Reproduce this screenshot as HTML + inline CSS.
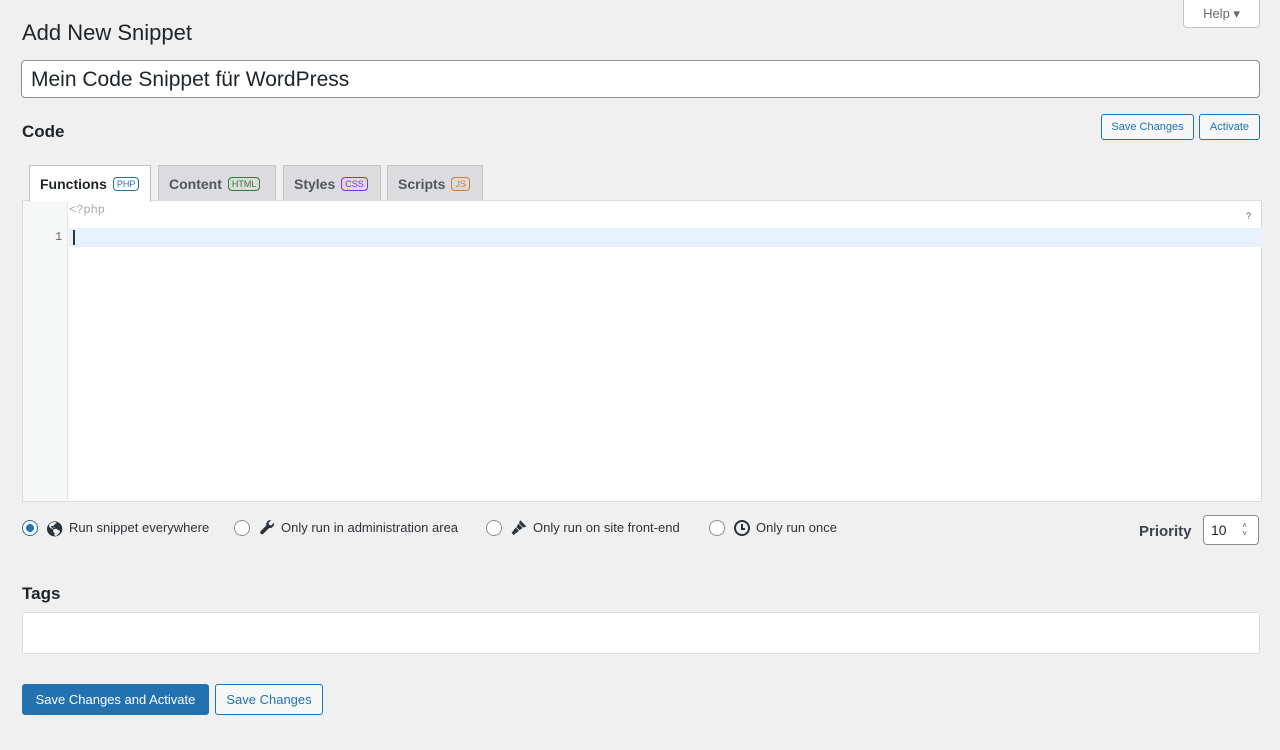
<!DOCTYPE html>
<html><head><meta charset="utf-8"><style>
*{box-sizing:border-box}
body{margin:0;width:1280px;height:750px;background:#f0f0f1;font-family:"Liberation Sans",sans-serif;color:#1d2327;position:relative;overflow:hidden}
.abs{position:absolute}
.btn2{position:absolute;border:1px solid #2271b1;color:#2271b1;background:#f6f7f7;border-radius:3px;font-size:11px;display:flex;align-items:center;justify-content:center}
.tab{position:absolute;top:165px;height:36px;border:1px solid #c3c4c7;border-bottom:none;background:#dcdcde;color:#50575e;font-size:14px;font-weight:bold;display:flex;align-items:center;padding-left:10px;gap:6px}
.badge{font-size:9px;font-weight:normal;border:1px solid;border-radius:4px;padding:1px 3px}
.radio{position:absolute;top:520px;width:16px;height:16px;border:1px solid #8c8f94;border-radius:50%;background:#fff}
.lbl{position:absolute;top:520px;font-size:13px;color:#2c3338}
</style></head><body>
<div class="abs" style="left:1183px;top:0;width:77px;height:28px;background:#fff;border:1px solid #c3c4c7;border-top:none;border-radius:0 0 4px 4px;font-size:13px;color:#646970;display:flex;align-items:center;justify-content:center">Help&nbsp;▾</div>
<div class="abs" style="left:22px;top:20px;font-size:22px;">Add New Snippet</div>
<div class="abs" style="left:21px;top:60px;width:1239px;height:38px;background:#fff;border:1px solid #8c8f94;border-radius:4px;font-size:21px;padding:7px 9px">Mein Code Snippet für WordPress</div>
<div class="abs" style="left:22px;top:122px;font-size:17px;font-weight:bold">Code</div>
<div class="btn2" style="left:1101px;top:114px;width:93px;height:26px">Save Changes</div>
<div class="btn2" style="left:1199px;top:114px;width:61px;height:26px">Activate</div>
<div class="tab" style="left:29px;width:122px;background:#fff;color:#1d2327;height:37px;z-index:2">Functions <span class="badge" style="color:#2271b1">PHP</span></div>
<div class="tab" style="left:158px;width:118px">Content <span class="badge" style="color:#2e7d32">HTML</span></div>
<div class="tab" style="left:283px;width:98px">Styles <span class="badge" style="color:#8c2bd9">CSS</span></div>
<div class="tab" style="left:387px;width:96px">Scripts <span class="badge" style="color:#d97a2b">JS</span></div>
<div class="abs" style="left:22px;top:200px;width:1240px;height:302px;background:#fff;border:1px solid #dcdcde">
 <div class="abs" style="left:0;top:0;width:45px;height:300px;background:#f6f7f7;border-right:1px solid #e5e5e5"></div>
 <div class="abs" style="left:46px;top:27px;width:1193px;height:19px;background:#e8f2fe"></div>
 <div class="abs" style="left:46px;top:2px;font-family:'Liberation Mono',monospace;font-size:12px;color:#aaa">&lt;?php</div>
 <div class="abs" style="left:32px;top:29px;font-family:'Liberation Mono',monospace;font-size:12px;color:#666">1</div>
 <div class="abs" style="left:50px;top:29px;width:1.5px;height:15px;background:#333"></div>
 <div class="abs" style="left:1223px;top:10px;font-size:9px;color:#555">?</div>
</div>
<div class="radio" style="left:22px;border-color:#2271b1"><div style="width:8px;height:8px;border-radius:50%;background:#2271b1;margin:3px"></div></div>
<div class="lbl" style="left:45px"><span style="font-size:15px">🌎︎</span></div>
<div class="lbl" style="left:69px">Run snippet everywhere</div>
<div class="radio" style="left:234px"></div>
<svg class="abs" style="left:259px;top:519px" width="17" height="17" viewBox="0 0 16 16"><path d="M14 3.5l-2.5 2.5-2-.5-.5-2L11.5 1A4 4 0 0 0 7 6L1.5 11.5a1.8 1.8 0 0 0 2.5 2.5L9.5 8.5A4 4 0 0 0 14 3.5z" fill="#2c3338"/></svg>
<div class="lbl" style="left:281px">Only run in administration area</div>
<div class="radio" style="left:486px"></div>
<svg class="abs" style="left:510px;top:519px" width="18" height="17" viewBox="0 0 16 16"><path d="M9 1l6 6-3 1-4-4z M7.5 4.5l4 4-3 2-3-3z M5 8l3 3-5 4-2-2z" fill="#2c3338"/></svg>
<div class="lbl" style="left:533px">Only run on site front-end</div>
<div class="radio" style="left:709px"></div>
<div class="abs" style="left:734px;top:520px;width:16px;height:16px;border:2px solid #2c3338;border-radius:50%"><div style="position:absolute;left:5px;top:2px;width:2px;height:5px;background:#2c3338"></div><div style="position:absolute;left:5px;top:6px;width:4px;height:2px;background:#2c3338"></div></div>
<div class="lbl" style="left:756px">Only run once</div>
<div class="abs" style="left:1139px;top:523px;font-size:15px;font-weight:bold;color:#3c434a">Priority</div>
<div class="abs" style="left:1203px;top:515px;width:56px;height:30px;background:#fff;border:1px solid #8c8f94;border-radius:4px;font-size:14px;padding:6px 7px">10<span style="position:absolute;right:11px;top:6px;font-size:8px;line-height:8px;color:#555">˄<br>˅</span></div>
<div class="abs" style="left:22px;top:584px;font-size:17px;font-weight:bold">Tags</div>
<div class="abs" style="left:22px;top:612px;width:1238px;height:42px;background:#fff;border:1px solid #dcdcde;border-radius:3px"></div>
<div class="abs" style="left:22px;top:684px;width:187px;height:31px;background:#2271b1;color:#fff;border-radius:3px;font-size:13px;display:flex;align-items:center;justify-content:center">Save Changes and Activate</div>
<div class="abs" style="left:215px;top:684px;width:108px;height:31px;background:#f6f7f7;color:#2271b1;border:1px solid #2271b1;border-radius:3px;font-size:13px;display:flex;align-items:center;justify-content:center">Save Changes</div>
</body></html>
